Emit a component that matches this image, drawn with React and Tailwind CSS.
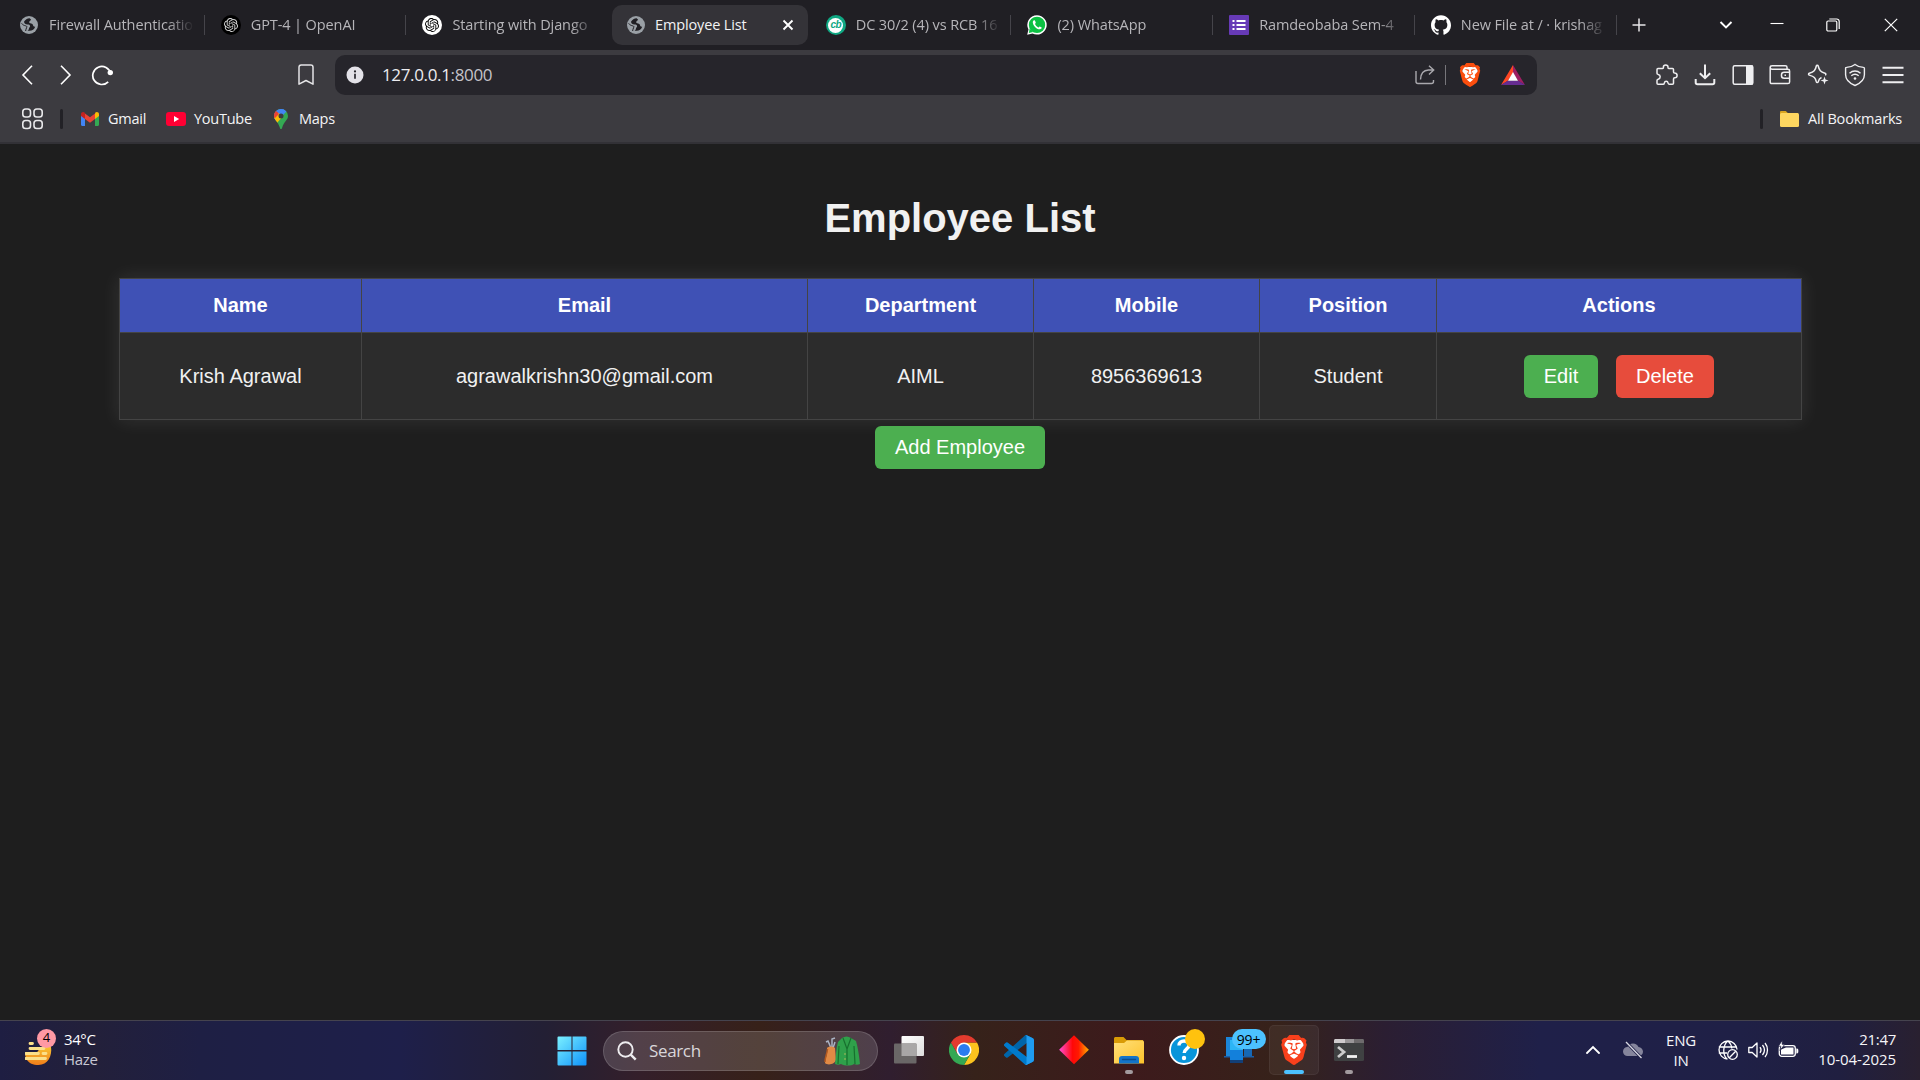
import React from "react";
import { SiOpenai, SiGithub, SiBrave } from "react-icons/si";

const UI = "font-['Open_Sans','Noto_Sans',sans-serif]";

function Globe() {
  return (
    <svg viewBox="0 0 20 20" className="size-5">
      <circle cx="10" cy="10" r="9" fill="#9aa0a6" />
      <path d="M10.6 3.2c-2.2.2-4.6 1.6-5.6 3.6.2 2 1.6 2.6 3.3 2.6 1.6 0 2.6.3 2.8 1.6.1 1.2-1 1.4-1.1 2.6 0 .9-.6 1.5-1.4 1.9 3.4 1 6.6-.6 7.6-3.8-1.4.2-2-.6-2.2-1.7-.3-1.4-1.6-1.2-2.8-1.7-1-.4-1.3-1.3-.6-2.1.6-.7 1.3-.6 1.4-1.6z" fill="#201f24" />
      <path d="M2.6 8.400c1 1.300 2.400 2.200 4 2.400 1.300 .2 1.600 1 .9 2-.6.9-.4 2-.9 3.200" fill="none" stroke="#201f24" strokeWidth="1" />
    </svg>
  );
}

function Knot({ dark }) {
  return (
    <span className={dark ? "flex size-5 items-center justify-center rounded-full bg-black text-[#d8d8d8]" : "flex size-5 items-center justify-center rounded-full bg-white text-black"}>
      <SiOpenai className="size-[14px]" />
    </span>
  );
}

function Cricbuzz() {
  return (
    <span className="flex size-5 items-center justify-center rounded-full bg-[#0fa883]">
      <span className="flex size-[15px] items-center justify-center rounded-full bg-white pb-px font-['Liberation_Sans',sans-serif] text-[10px] leading-none font-bold tracking-[-0.5px] text-[#0fa883] italic">cb</span>
    </span>
  );
}

function Whatsapp() {
  return (
    <svg viewBox="0 0 20 20" className="size-5">
      <path d="M10 .2a9.700 9.700 0 0 0-8.500 14.400L.2 19.800l5.300-1.300A9.700 9.700 0 1 0 10 .2z" fill="#fff" />
      <circle cx="10" cy="9.900" r="8.200" fill="#0cc143" />
      <path d="M2.600 13.500 1.900 18l4.200-1z" fill="#0cc143" />
      <path d="M7.200 5.200c-.9.300-1.500 1.200-1.400 2.200.4 3.400 3.400 6.500 6.900 6.900 1 .1 2-.7 2.100-1.700 0-.3-1.900-1.300-2.200-1.200-.4.200-.8 1.100-1.200 1-1.600-.6-2.800-1.800-3.400-3.300-.1-.4.800-.9.800-1.300 0-.5-.8-2.400-1.100-2.600z" fill="#fff" />
    </svg>
  );
}

function FormsIcon() {
  return (
    <svg viewBox="0 0 20 20" className="size-5">
      <rect width="20" height="20" rx="1" fill="#673ab7" />
      <g fill="#fff">
        <rect x="3.500" y="5" width="2" height="2" />
        <rect x="3.500" y="9" width="2" height="2" />
        <rect x="3.500" y="13" width="2" height="2" />
        <rect x="7.500" y="5" width="9" height="2" />
        <rect x="7.500" y="9" width="9" height="2" />
        <rect x="7.500" y="13" width="9" height="2" />
      </g>
    </svg>
  );
}

const tabs = [
  { title: "Firewall Authenticatio", icon: <Globe />, sep: true },
  { title: "GPT-4 | OpenAI", icon: <Knot dark />, sep: true },
  { title: "Starting with Django", icon: <Knot />, sep: false },
  { title: "Employee List", icon: <Globe />, active: true },
  { title: "DC 30/2 (4) vs RCB 16", icon: <Cricbuzz />, sep: true },
  { title: "(2) WhatsApp", icon: <Whatsapp />, sep: true },
  { title: "Ramdeobaba Sem-4", icon: <FormsIcon />, sep: true },
  { title: "New File at / · krishag", icon: <SiGithub className="size-5 text-white" />, sep: true },
];

function Tab({ title, icon, active, sep }) {
  return (
    <div className="flex h-[50px] w-[201.700px] shrink-0 items-center justify-between">
      <div className={active ? "ml-[4px] flex h-10 w-[196px] items-center rounded-[10px] bg-[#343338] pr-[12px] pl-[14px]" : "ml-[5px] flex h-10 w-[195px] items-center pr-[9px] pl-[11px]"}>
        <span className="shrink-0">{icon}</span>
        <span
          className={
            active
              ? "ml-[9px] flex-1 overflow-hidden pb-px text-[14.500px] tracking-[-0.150px] whitespace-nowrap text-[#f2f2f4]"
              : "ml-[10px] flex-1 overflow-hidden [mask-image:linear-gradient(to_right,black_82%,transparent)] pb-px text-[14.500px] tracking-[-0.100px] whitespace-nowrap text-[#b6b5b9]"
          }
        >
          {title}
        </span>
        {active && (
          <svg viewBox="0 0 16 16" className="size-4" stroke="#fff" strokeWidth="1.900">
            <path d="m3.500 3.500 9 9M12.500 3.500l-9 9" />
          </svg>
        )}
      </div>
      {sep && <div className="h-5 w-px bg-[#45444a]" />}
    </div>
  );
}

function TabStrip() {
  return (
    <div className="flex h-[50px] items-center bg-[#201f24] pl-[3px]">
      {tabs.map((t) => (
        <Tab key={t.title} {...t} />
      ))}
      <svg viewBox="0 0 14 14" className="ml-[15px] size-[14px] shrink-0" stroke="#e6e6e8" strokeWidth="1.500">
        <path d="M7 .5v13M.5 7h13" />
      </svg>
      <div className="ml-auto flex items-center">
        <svg viewBox="0 0 14 10" className="mr-[37px] h-[10px] w-[14px]" fill="none" stroke="#fff" strokeWidth="1.900">
          <path d="m1.500 2 5.500 5.500L12.500 2" />
        </svg>
        <svg viewBox="0 0 14 14" className="mr-[42px] size-[14px]" stroke="#fff" strokeWidth="1.100">
          <path d="M.5 5.500h13" />
        </svg>
        <svg viewBox="0 0 14 14" className="mr-[44px] size-[14px]" fill="none" stroke="#fff" strokeWidth="1.200">
          <rect x=".8" y="3" width="10" height="10" rx="1.300" />
          <path d="M3.300 1h7.400a2.500 2.500 0 0 1 2.500 2.500V11" />
        </svg>
        <svg viewBox="0 0 14 14" className="mr-[22px] size-[14px]" stroke="#fff" strokeWidth="1.200">
          <path d="m.8.8 12.400 12.400M13.200.8.8 13.200" />
        </svg>
      </div>
    </div>
  );
}

function BraveMark({ className }) {
  return (
    <span className={className}>
      <svg viewBox="0 0 24 24" className="size-full" fill="none">
        <path d="M4.500 4 19.500 4 20 12 16 19 12 22 8 19 4 12z" fill="#fff" />
      </svg>
      <SiBrave className="absolute inset-0 size-full text-[#fb4e0e]" />
    </span>
  );
}

function ToolbarIcons() {
  return (
    <div className="ml-auto flex items-center gap-[15.600px] pr-[16px]">
      <svg viewBox="0 0 22 22" className="size-[22px]" fill="none" stroke="#eeeef0" strokeWidth="1.500" strokeLinejoin="round">
        <path d="M2 4.500h4.500c.8 0 1-.5.900-1.200C7.200 2 8.300.900 9.700.900s2.500 1.100 2.300 2.400c-.1.700.1 1.200.9 1.200h3.600c.6 0 1 .4 1 1v2.400c0 .8.500 1 1.200 1.100 1.300.1 2.400 1.100 2.400 2.400s-1.100 2.300-2.400 2.400c-.7.100-1.200.3-1.200 1.100v4.400c0 .6-.4 1-1 1h-3.200c-.8 0-1-.5-1.200-1.200-.2-1-.9-1.800-1.900-1.800s-1.700.8-1.900 1.800c-.1.700-.4 1.200-1.200 1.200H2c-.6 0-1-.4-1-1v-2.900c0-.8.500-1 1.200-1.200 1.100-.2 2-1.200 2-2.400s-.9-2.200-2-2.400C1.500 10.200 1 10 1 9.200V5.500c0-.6.400-1 1-1z" />
      </svg>
      <svg viewBox="0 0 22 22" className="size-[22px]" fill="none" stroke="#eeeef0" strokeWidth="2">
        <path d="M11 .500v13.500M5.800 9.200 11 14.200l5.200-5M1.700 15v3.500c0 1 .7 1.700 1.700 1.700h15.200c1 0 1.700-.7 1.700-1.700V15" />
      </svg>
      <svg viewBox="0 0 22 22" className="size-[22px]">
        <rect x="1.200" y="1.700" width="19.600" height="18.600" rx="1.500" fill="none" stroke="#eeeef0" strokeWidth="1.500" />
        <path d="M14 1.500h7v19h-7z" fill="#eeeef0" />
      </svg>
      <svg viewBox="0 0 22 22" className="size-[22px]" fill="none" stroke="#eeeef0" strokeWidth="1.500">
        <path d="M18 5V3.300c0-.9-.7-1.500-1.600-1.500H3.200C2 1.800 1.200 2.600 1.200 3.500S2 5.200 3.200 5.200h15.700c1 0 1.700.7 1.700 1.700v11c0 1-.7 1.700-1.700 1.700H3c-1 0-1.800-.7-1.800-1.700V3.500M20.600 8.300h-5.400c-1.700 0-2.700 1-2.700 2.500v1c0 1.500 1 2.500 2.700 2.500h5.400M15.500 11.300h1.500" />
      </svg>
      <svg viewBox="0 0 22 22" className="size-[22px]" fill="none" stroke="#eeeef0" strokeWidth="1.500" strokeLinejoin="round">
        <path d="M14.500 13.500c-2 .8-2.700 1.900-3.300 4.200-.3 1-1.600 1-1.900 0-.9-4-2-5.200-7-6.600-1-.3-1-1.500 0-1.800C7 7.900 8.400 6.600 9.300 2c.2-1 1.600-1 1.900 0 1 4.400 2.400 5.900 6.800 7.200 1.100.3 1.100 1.600.1 1.900" />
        <path d="M17.500 12.500l1 3 3 1-3 1-1 3-1-3-3-1 3-1z" fill="#eeeef0" stroke="none" />
      </svg>
      <svg viewBox="0 0 22 24" className="h-6 w-[22px]" fill="none" stroke="#eeeef0" strokeWidth="1.400">
        <path d="M11 1.500C8.700 3.300 5.500 4.200 2.500 4.400c-.5 0-.9.300-.9.800v6.500c0 4.600 4 8.500 9.400 10.800 5.400-2.300 9.400-6.200 9.400-10.800V5.200c0-.5-.4-.8-.9-.8-3-.2-6.200-1.100-8.500-2.900z" />
        <path d="M5.500 10.200c3.200-2.900 7.800-2.900 11 0M7.300 12.800c2.200-1.900 5.200-1.900 7.400 0" />
        <circle cx="11" cy="15.500" r="1.300" fill="#eeeef0" stroke="none" />
      </svg>
      <svg viewBox="0 0 22 20" className="h-5 w-[22px]" stroke="#eeeef0" strokeWidth="2">
        <path d="M.5 2.700h21M.5 10h21M.5 17.200h21" />
      </svg>
    </div>
  );
}

function AddressRow() {
  return (
    <div className="flex h-[50px] items-center pl-[20px]">
      <svg viewBox="0 0 14 20" className="h-5 w-[14px]" fill="none" stroke="#fff" strokeWidth="1.600">
        <path d="M12 .800 3 10l9 9.200" />
      </svg>
      <svg viewBox="0 0 14 20" className="ml-[25px] h-5 w-[14px]" fill="none" stroke="#fff" strokeWidth="1.600">
        <path d="m2 .800 9 9.200-9 9.200" />
      </svg>
      <svg viewBox="0 0 24 22" className="ml-[18px] h-[22px] w-6" fill="none">
        <path d="M17.200 17.800a9 9 0 1 1 2.400-8" stroke="#fff" strokeWidth="1.700" />
        <circle cx="19.300" cy="8.600" r="2.700" fill="#fff" />
      </svg>
      <svg viewBox="0 0 16 22" className="ml-[183px] h-[22px] w-4" fill="none" stroke="#e4e4e6" strokeWidth="1.500" strokeLinejoin="round">
        <path d="M1 3.200C1 1.900 1.900 1 3.200 1h9.600C14.100 1 15 1.900 15 3.200v17L8 16.500 1 20.200z" />
      </svg>
      <div className="ml-[21px] flex h-10 w-[1202px] items-center rounded-[10px] bg-[#26252b] pr-[12px] pl-[11px]">
        <svg viewBox="0 0 18 18" className="size-[18px]">
          <circle cx="9" cy="9" r="8.500" fill="#e3e2e8" />
          <path d="M9 7.800v5" stroke="#26252b" strokeWidth="1.700" />
          <circle cx="9" cy="5.400" r="1.100" fill="#26252b" />
        </svg>
        <span className="ml-[18px] pb-px text-[17px] tracking-[-0.350px] text-[#ececf0]">127.0.0.1<span className="text-[#c4c3c9]">:8000</span></span>
        <svg viewBox="0 0 20 20" className="ml-auto size-5" fill="none" stroke="#a9a8ad" strokeWidth="1.400">
          <path d="M1 6v10.500c0 1.100.8 2 2 2h13.500c1.100 0 2-.8 2-2V15M5.500 14.500c.2-5.500 3-9.300 8-9.500h5M14 .800l4.700 4.200L14 9.400" />
        </svg>
        <div className="ml-[10px] h-5 w-px bg-[#77767b]" />
        <BraveMark className="relative ml-[12px] block size-6" />
        <svg viewBox="0 0 24 20" className="ml-[19px] h-5 w-6">
          <path d="M12 0 0 20l7-4.200L12 8z" fill="#ff4724" />
          <path d="M12 0l12 20-7-4.200L12 8z" fill="#9e1f63" />
          <path d="M0 20h24l-7-4.500H7z" fill="#662d91" />
          <path d="m12 7 5 8.700H7z" fill="#fff" />
        </svg>
      </div>
      <ToolbarIcons />
    </div>
  );
}

function BookmarksRow() {
  return (
    <div className="flex h-[38px] items-center pl-[22px] text-[14.500px] tracking-[-0.250px] text-[#f4f4f6]">
      <svg viewBox="0 0 22 22" className="size-[22px]" fill="none" stroke="#e8e8ea" strokeWidth="1.600">
        <rect x=".8" y="1" width="7.700" height="8" rx="2.800" />
        <rect x="12" y="1" width="8.200" height="8" rx="2.800" />
        <rect x=".8" y="12.500" width="7.700" height="8" rx="2.800" />
        <rect x="12" y="12.500" width="8.200" height="8" rx="2.800" />
      </svg>
      <div className="ml-[16px] h-5 w-[3px] rounded bg-[#222126]" />
      <svg viewBox="0 0 18 14" className="ml-[18px] h-[14px] w-[18px]">
        <path d="M0 3v9.800C0 13.500.5 14 1.200 14H4V6z" fill="#4285f4" />
        <path d="M14 6v8h2.800c.7 0 1.200-.5 1.200-1.200V3z" fill="#34a853" />
        <path d="M14 1.500V7l4-3V2.300C18 .3 15.800-.6 14.400.600z" fill="#fbbc04" />
        <path d="M4 7V1.500l5 3.800 5-3.800V7l-5 3.800z" fill="#ea4335" />
        <path d="M0 2.300V4l4 3V1.500L3.600.600C2.200-.6 0 .300 0 2.300z" fill="#c5221f" />
      </svg>
      <span className="ml-[9px] w-[38px] pb-px whitespace-nowrap">Gmail</span>
      <svg viewBox="0 0 20 14" className="ml-[20px] h-[14px] w-5">
        <rect width="20" height="14" rx="3" fill="#ff0033" />
        <path d="M8 4v6l5.200-3z" fill="#fff" />
      </svg>
      <span className="ml-[8px] w-[58px] pb-px whitespace-nowrap">YouTube</span>
      <svg viewBox="0 0 14 20" className="ml-[22px] h-5 w-[14px]">
        <clipPath id="pin"><path d="M7 0a7 7 0 0 0-7 7c0 4 4 5.500 5.800 11.500.3 1 .6 1.500 1.200 1.500s.9-.5 1.200-1.500C10 12.500 14 11 14 7a7 7 0 0 0-7-7z" /></clipPath>
        <g clipPath="url(#pin)">
          <rect width="14" height="20" fill="#34a853" />
          <path d="M0 14 11.500 1H14V-1H0z" fill="#4285f4" />
          <path d="M0 0v8l5-4L1.500 1z" fill="#ea4335" />
          <path d="M0 6.500V13l3 1 6-7-4-3z" fill="#fbbc04" />
          <path d="M0 2.500 1.600 2 5 5 1 9H0z" fill="#ea4335" />
          <path d="M2 2 9-1l4 3-4.500 4.500L6 5z" fill="#4285f4" />
        </g>
        <circle cx="7" cy="7" r="2.500" fill="#3c3b40" />
      </svg>
      <span className="ml-[11px] pb-px">Maps</span>
      <div className="ml-auto h-5 w-[3px] rounded bg-[#222126]" />
      <svg viewBox="0 0 20 16" className="ml-[17px] h-4 w-5">
        <path d="M0 1.200C0 .500.500 0 1.200 0h4.600l2 2H18v4H0z" fill="#d9a520" />
        <rect y="2" width="19" height="14" rx="1.500" fill="#fdd660" />
      </svg>
      <span className="mr-[17px] ml-[8px] w-[95px] pb-px tracking-[-0.200px] whitespace-nowrap">All Bookmarks</span>
    </div>
  );
}

const columns = [
  ["Name", "w-[242px]"],
  ["Email", "w-[446px]"],
  ["Department", "w-[226px]"],
  ["Mobile", "w-[226px]"],
  ["Position", "w-[177px]"],
  ["Actions", "w-[365px]"],
];
const employee = ["Krish Agrawal", "agrawalkrishn30@gmail.com", "AIML", "8956369613", "Student"];

function Page() {
  return (
    <main className="flex flex-1 flex-col items-center bg-[#1e1e1e] pt-[51px] font-['Liberation_Sans',Arial,sans-serif] text-[20px] text-[#f1f1f1]">
      <h1 className="text-[40px] leading-[46px] font-bold">Employee List</h1>
      <table className="mt-[37px] ml-px w-[1682px] table-fixed border-collapse bg-[#2c2c2c] text-center shadow-[0_0_19px_rgba(255,255,255,0.1)]">
        <thead>
          <tr className="h-[54px] bg-[#3f51b5] text-white">
            {columns.map(([c, w]) => (
              <th key={c} className={w + " border border-[#444] p-0 pb-[2px] font-bold"}>{c}</th>
            ))}
          </tr>
        </thead>
        <tbody>
          <tr className="h-[87px]">
            {employee.map((v) => (
              <td key={v} className="border border-[#444] p-0">{v}</td>
            ))}
            <td className="border border-[#444] p-0">
              <div className="flex justify-center gap-[18px]">
                <button className="h-[43px] w-[74px] rounded-[6px] bg-[#4caf50] text-white">Edit</button>
                <button className="h-[43px] w-[98px] rounded-[6px] bg-[#e74c3c] text-white">Delete</button>
              </div>
            </td>
          </tr>
        </tbody>
      </table>
      <button className="mt-[6px] h-[43px] w-[170px] rounded-[6px] bg-[#4caf50] pb-[2px] text-white">Add Employee</button>
    </main>
  );
}

function Weather() {
  return (
    <div className="flex items-center pb-[2px] pl-[25px]">
      <div className="relative h-[34px] w-[34px]">
        <svg viewBox="0 0 34 36" className="absolute -top-px left-0 h-9 w-[34px]">
          <defs>
            <linearGradient id="sun" x1="0" y1="0" x2="0" y2="1"><stop offset="0" stopColor="#f9c332" /><stop offset="1" stopColor="#ef7d1a" /></linearGradient>
          </defs>
          <path d="M0 23h10l6-8h10c1.500 9-3.500 18-12.500 18C8 33 4 31 2 28z" fill="url(#sun)" />
          <g stroke="#fbe08a" strokeWidth="2.800" strokeLinecap="round">
            <path d="M5 11.500h2.500M5 16.500h14M.500 21.500h13M18 21.500h3M.500 26.500h20" />
          </g>
        </svg>
        <span className="absolute -top-[4px] left-[12px] flex size-[19px] items-center justify-center rounded-full bg-[#ff99a4] text-[13px] text-black">4</span>
      </div>
      <div className="ml-[5px] flex flex-col pb-px text-[15px] leading-[20px]">
        <span className="tracking-[-0.400px] text-white">34°C</span>
        <span className="tracking-[-0.300px] text-[#c9c8d4]">Haze</span>
      </div>
    </div>
  );
}

function WindowsLogo() {
  return (
    <svg viewBox="0 0 30 30" className="size-[30px]">
      <defs>
        <linearGradient id="win" gradientUnits="userSpaceOnUse" x1="0" y1="0" x2="30" y2="30"><stop offset="0" stopColor="#7df2ff" /><stop offset="1" stopColor="#0c90fb" /></linearGradient>
      </defs>
      <path d="M1.500.5H14.500v13.500H.5V1.500a1 1 0 0 1 1-1zM15.500 .5h13a1 1 0 0 1 1 1V14h-14zM.5 15.500h14V29.500h-13a1 1 0 0 1-1-1zM15.500 15.500h14v13a1 1 0 0 1-1 1h-13z" fill="url(#win)" />
    </svg>
  );
}

function SearchBox() {
  return (
    <div className="flex h-10 w-[275px] items-center rounded-full border border-white/15 bg-white/15 pr-[17px] pl-[13px]">
      <svg viewBox="0 0 20 20" className="size-5" fill="none" stroke="#eeedf0">
        <circle cx="8.500" cy="8.500" r="7.200" strokeWidth="1.900" />
        <path d="m13.700 13.700 5 5" strokeWidth="2.400" />
      </svg>
      <span className="ml-[12px] text-[17px] tracking-[-0.350px] text-[#d9d6da]">Search</span>
      <svg viewBox="0 0 36 30" className="ml-auto h-[30px] w-9">
        <g stroke="#aab3c4" strokeWidth="1.500" fill="none"><path d="m7 12-3-7-2 1M8 11V3l3-1M9 12l2-6" /></g>
        <path d="M3 12c2-2 6-2 8 0l1 12c-1 4-8 6-11 3 0-5 3-8 2-15z" fill="#e08a45" />
        <path d="M1 26c0-5 2-8 2.500-13" stroke="#b45a20" strokeWidth="1.500" fill="none" />
        <path d="M18 2c3-2 6-2 9 0l5 3c2 7 3 14 4 23-2 1-4 1-6 0-3 2-9 2-13 0-2 1-4 1-6 0 1-8 1-16 3-22z" fill="#2fa04a" />
        <path d="m19 2 4 11 4-11M23 13v16M15 10l-1 18M30 10l1 18" stroke="#17702e" strokeWidth="1.200" fill="none" />
        <circle cx="21" cy="18" r=".7" fill="#d8c060" />
        <circle cx="21" cy="23" r=".7" fill="#d8c060" />
      </svg>
    </div>
  );
}

function TaskView() {
  return (
    <svg viewBox="0 0 30 30" className="size-[30px]">
      <defs><linearGradient id="tv" x1="0" y1="0" x2="1" y2="1"><stop offset="0" stopColor="#fff" /><stop offset="1" stopColor="#ddd" /></linearGradient></defs>
      <rect x="7.500" y="1" width="22.500" height="20" rx="1" fill="url(#tv)" />
      <rect x="0" y="8.500" width="22.500" height="20" rx="1" fill="#6a6767" />
      <path d="M7.500 8.500h15V21h-15z" fill="#a9a7a7" />
    </svg>
  );
}

function Chrome() {
  return (
    <svg viewBox="0 0 48 48" className="size-[30px]">
      <path d="M24 12h20.800A24 24 0 0 1 24 48l10.400-18z" fill="#fcc31e" />
      <path d="M3.200 12A24 24 0 0 0 24 48l10.400-18H13.600z" fill="#34a853" />
      <path d="M24 0A24 24 0 0 0 3.200 12l10.400 18L24 12h20.800A24 24 0 0 0 24 0z" fill="#e33b2e" />
      <circle cx="24" cy="24" r="12" fill="#fff" />
      <circle cx="24" cy="24" r="9.500" fill="#2b7cf0" />
    </svg>
  );
}

function Vscode() {
  return (
    <svg viewBox="0 0 100 100" className="size-[30px]">
      <path d="M96.500 10.800 75.900.900a6.200 6.200 0 0 0-7.100 1.200L1.300 63.600a4.200 4.200 0 0 0 0 6.200l5.500 5a4.200 4.200 0 0 0 5.300.200l81.300-61.600c2.700-2.100 6.600-.1 6.600 3.300v-.2a6.300 6.300 0 0 0-3.500-5.700z" fill="#0065a9" />
      <path d="m96.500 89.200-20.600 9.900a6.200 6.200 0 0 1-7.100-1.200L1.300 36.400a4.200 4.200 0 0 1 0-6.200l5.500-5a4.200 4.200 0 0 1 5.300-.200l81.300 61.600c2.700 2.100 6.600.1 6.600-3.300v.2a6.300 6.300 0 0 1-3.500 5.700z" fill="#007acc" />
      <path d="M75.900 99.100a6.200 6.200 0 0 1-7.100-1.200c2.300 2.300 6.200.7 6.200-2.600V4.700c0-3.300-3.900-4.900-6.200-2.600A6.200 6.200 0 0 1 75.900.900l20.600 9.900a6.300 6.300 0 0 1 3.500 5.700v67a6.300 6.300 0 0 1-3.500 5.700z" fill="#1f9cf0" />
    </svg>
  );
}

function Diamond() {
  return (
    <svg viewBox="0 0 30 30" className="size-[30px]">
      <defs><linearGradient id="dia"><stop offset="0" stopColor="#ff4fd8" /><stop offset=".45" stopColor="#ff0808" /><stop offset=".65" stopColor="#ff1a00" /><stop offset="1" stopColor="#ffb000" /></linearGradient></defs>
      <path d="m15 .3 14.900 14.500L15 29.300.1 14.800z" fill="url(#dia)" />
    </svg>
  );
}

function Explorer() {
  return (
    <svg viewBox="0 0 30 30" className="size-[30px]">
      <defs><linearGradient id="fold" x1="0" y1="0" x2="1" y2="1"><stop offset="0" stopColor="#ffe07a" /><stop offset="1" stopColor="#fdc22b" /></linearGradient></defs>
      <path d="M0 3.500c0-.8.700-1.500 1.500-1.500h8l3 3H29v5H0z" fill="#d99b06" />
      <path d="M0 8h10l3-2.500h15.500c.8 0 1.500.6 1.500 1.500v21.500H0z" fill="url(#fold)" />
      <path d="M5 28.500V24c0-2 1-3 3-3h14c2 0 3 1 3 3v4.500z" fill="#1374c9" />
      <path d="M8.500 24.500h13" stroke="#0a4d8f" strokeWidth="1.300" strokeLinecap="round" />
    </svg>
  );
}

function Help() {
  return (
    <svg viewBox="0 0 38 38" className="absolute -top-[6px] left-0 size-[38px]">
      <circle cx="15" cy="21" r="14" fill="#0895da" stroke="#fff" strokeWidth="1.800" />
      <path d="M10 16.500c0-3 2.300-4.500 5-4.500s5 1.600 5 4.200c0 3.800-4.800 3.600-4.800 7.800" fill="none" stroke="#fff" strokeWidth="3.400" />
      <circle cx="15" cy="29" r="2.200" fill="#fff" />
      <circle cx="26" cy="10" r="10" fill="#ffc20e" />
    </svg>
  );
}

function PhoneLink() {
  return (
    <>
      <svg viewBox="0 0 30 30" className="size-[30px]">
        <path d="M2 2h14v19H2z" fill="#0f6cbd" />
        <path d="M2 2h7v19H2z" fill="#1b86d9" />
        <path d="M0 21h30v1.500H0z" fill="#1a5fa8" />
        <path d="M20 14h8v7h-8z" fill="#1668b5" />
        <path d="M6 5h13v20H6z" fill="#2cb5f5" />
        <path d="M6 15h13v10H6z" fill="#1380db" />
        <path d="M6 25h13v3H6z" fill="#123f77" />
      </svg>
      <span className="absolute -top-[6px] left-[8px] flex h-5 w-[34px] items-center justify-center rounded-full bg-[#4cc2ff] text-[14px] tracking-[-0.200px] text-black">99+</span>
    </>
  );
}

function BraveTask() {
  return (
    <span className="relative block size-[30px]">
      <svg viewBox="0 0 24 24" className="size-full" fill="none">
        <path d="M4.500 4 19.500 4 20 12 16 19 12 22 8 19 4 12z" fill="#fff" />
      </svg>
      <SiBrave className="absolute inset-0 size-full text-[#f9401c]" />
    </span>
  );
}

function Terminal() {
  return (
    <svg viewBox="0 0 30 30" className="size-[30px]">
      <rect y="4" width="30" height="22" rx="1.500" fill="#3f4142" />
      <path d="M1.500 4H20v4H0V5.500C0 4.700.700 4 1.500 4z" fill="#cfcbcd" />
      <path d="M11 4h9v4h-9z" fill="#9a9799" />
      <path d="M20 4h8.500c.8 0 1.500.7 1.500 1.500V8H20z" fill="#6e6b6d" />
      <path d="m4 12 6 5-6 5" fill="none" stroke="#ccc" strokeWidth="2.800" />
      <path d="M13 21.500h10" stroke="#f2f2f2" strokeWidth="2.800" />
    </svg>
  );
}

const apps = [
  { id: "view", icon: <TaskView /> },
  { id: "chrome", icon: <Chrome /> },
  { id: "code", icon: <Vscode /> },
  { id: "diamond", icon: <Diamond /> },
  { id: "files", icon: <Explorer />, running: true },
  { id: "help", icon: <Help /> },
  { id: "phone", icon: <PhoneLink /> },
  { id: "brave", icon: <BraveTask />, focused: true },
  { id: "terminal", icon: <Terminal />, running: true },
];

function AppSlot({ icon, running, focused }) {
  return (
    <div className="flex w-[55px] justify-center">
      <div className={focused ? "relative flex size-[50px] items-center justify-center rounded-[5px] border border-white/5 bg-white/5" : "relative flex size-[50px] items-center justify-center"}>
        <div className="relative size-[30px]">{icon}</div>
        {running && <div className="absolute bottom-[1px] h-1 w-2 rounded-full bg-[#a29a9e]" />}
        {focused && <div className="absolute bottom-0 h-1 w-5 rounded-full bg-[#4cc2ff]" />}
      </div>
    </div>
  );
}

function Tray() {
  return (
    <div className="ml-auto flex items-center pr-[24px] pb-[2px] text-[#f5f5f8]">
      <svg viewBox="0 0 14 10" className="h-[10px] w-[14px]" fill="none" stroke="#fff" strokeWidth="1.800" strokeLinecap="round">
        <path d="M1 8l6-6 6 6" />
      </svg>
      <svg viewBox="0 0 20 18" className="ml-[23px] h-[18px] w-5">
        <path d="M4.500 6A6 6 0 0 1 15.500 6C18 6.300 20 8 20 10.800 20 13.400 18 15 15.500 15h-11A4.500 4.500 0 0 1 4.500 6z" fill="#85859c" />
        <path d="m3 1 15.500 16" stroke="#1f2048" strokeWidth="3" />
        <path d="m3 1 15.500 16" stroke="#d8d8e2" strokeWidth="1.300" />
      </svg>
      <div className="ml-[23px] flex w-[30px] flex-col items-center text-[15px] leading-[20px] tracking-[-0.200px]">
        <span>ENG</span>
        <span>IN</span>
      </div>
      <svg viewBox="0 0 20 20" className="ml-[22px] size-5" fill="none" stroke="#fff" strokeWidth="1.300">
        <path d="M9.500 19A9 9 0 1 1 19 9.500M.8 7h17.600M.8 13H9M9 19c-4.500-4-4.500-14 1-18M10 1c2.200 1.800 3.500 4.500 3.800 7.500" />
        <circle cx="14.500" cy="14.500" r="4.800" />
        <path d="m11.300 17.700 6.400-6.400" />
      </svg>
      <svg viewBox="0 0 21 20" className="ml-[10px] h-5 w-[21px]" fill="none" stroke="#fff" strokeWidth="1.300" strokeLinejoin="round">
        <path d="M.8 7.500h3.400L9 3v14l-4.800-4.500H.8zM12 7.200c1.200 1.600 1.200 4 0 5.600M14.500 5c2.400 3 2.400 7 0 10M17 3c3.300 4 3.300 10 0 14" />
      </svg>
      <svg viewBox="0 0 21 20" className="ml-[9px] h-5 w-[21px]">
        <rect x="1.300" y="5.700" width="16" height="10.600" rx="2.500" fill="none" stroke="#fff" strokeWidth="1.300" />
        <path d="M3 9.500 8 7.500h7.500v7H3z" fill="#fff" />
        <path d="M18.300 8.500c1.300 0 2 .7 2 1.500v2c0 .8-.7 1.500-2 1.500z" fill="#fff" />
        <path d="M4.500 0 .300 6.200h2.500L2 10.500l4.800-6.200H4.200z" fill="#fff" stroke="#1f2044" strokeWidth=".8" />
      </svg>
      <div className="ml-[19px] flex w-[78px] flex-col items-end pb-px text-[15px] leading-[20px] tracking-[-0.050px] whitespace-nowrap">
        <span className="tracking-[-0.300px]">21:47</span>
        <span>10-04-2025</span>
      </div>
    </div>
  );
}

function Taskbar() {
  return (
    <footer className={"flex h-[60px] items-center border-t border-[#45434e] bg-[linear-gradient(90deg,#1e1e42_0px,#23203a_90px,#1e1f44_200px,#1e1f4a_400px,#231f34_545px,#341f2a_640px,#372119_760px,#301e2f_890px,#36221a_975px,#3d1a1c_1130px,#36221a_1280px,#2b1e32_1385px,#1f2049_1540px,#1f2046_1740px,#201f40_1840px,#292030_1920px)] " + UI}>
      <div className="w-[557px]">
        <Weather />
      </div>
      <WindowsLogo />
      <div className="ml-[16px]">
        <SearchBox />
      </div>
      <div className="ml-[3px] flex items-center pb-px">
        {apps.map((a) => (
          <AppSlot key={a.id} {...a} />
        ))}
      </div>
      <Tray />
    </footer>
  );
}

export default function App() {
  return (
    <div className="flex h-[1080px] w-[1920px] flex-col overflow-hidden bg-[#1e1e1e]">
      <header className={"h-[144px] border-b-2 border-[#323136] bg-[#3c3b40] " + UI}>
        <TabStrip />
        <AddressRow />
        <BookmarksRow />
      </header>
      <Page />
      <Taskbar />
    </div>
  );
}
